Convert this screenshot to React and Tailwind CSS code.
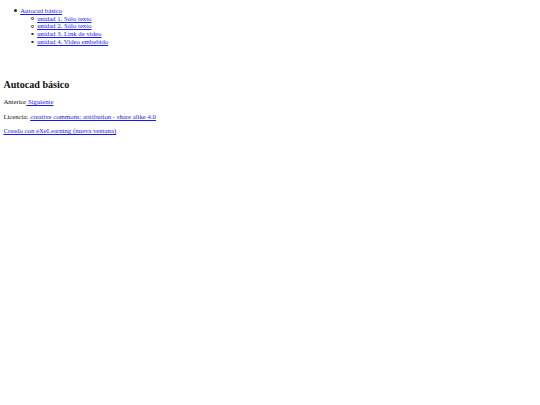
function Item({ children, hollow }) {
  return (
    <li className="relative">
      {hollow ? (
        <span className="absolute left-[-6.2px] top-[2.7px] size-[2.6px] rounded-full border-[0.6px] border-[#333]" />
      ) : (
        <span className="absolute left-[-6.2px] top-[2.7px] size-[2.6px] rounded-full bg-[#222]" />
      )}
      {children}
    </li>
  );
}

export default function App() {
  const link = "text-[#1a1aee] underline decoration-[0.6px] underline-offset-[1px]";
  return (
    <div className="min-h-[405px] bg-white px-[3.375px] pt-[6.75px] font-['Liberation_Serif','Times_New_Roman',serif] text-[6.75px] leading-[7.76px] text-[#111]">
      <ul className="list-none pl-[16.875px]">
        <Item>
          <a href="#" className={link}>Autocad básico</a>
          <ul className="list-none pl-[16.875px]">
            <Item hollow><a href="#" className={link}>unidad 1. Sólo texto</a></Item>
            <Item hollow><a href="#" className={link}>unidad 2. Sólo texto</a></Item>
            <Item hollow><a href="#" className={link}>unidad 3. Link de video</a></Item>
            <Item hollow><a href="#" className={link}>unidad 4. Video embebido</a></Item>
          </ul>
        </Item>
      </ul>
      <h1 className="mt-[33px] text-[10.125px] leading-[11.64px] font-bold">Autocad básico</h1>
      <p className="mt-[8px]">
        Anterior<a href="#" className={link}> Siguiente</a>
      </p>
      <p className="mt-[6.75px]">
        Licencia: <a href="#" className={link}>creative commons: attribution - share alike 4.0</a>
      </p>
      <p className="mt-[6.75px]">
        <a href="#" className={link}>Creado con eXeLearning (nueva ventana)</a>
      </p>
    </div>
  );
}
